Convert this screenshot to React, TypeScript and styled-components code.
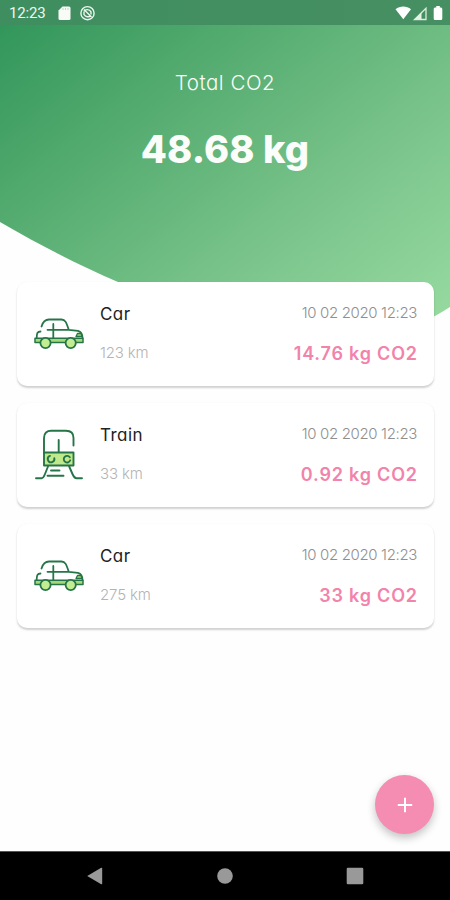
import React from "react";
import styled, { createGlobalStyle } from "styled-components";

const GlobalStyle = createGlobalStyle`
  * { box-sizing: border-box; }
  body {
    margin: 0;
    background: #fff;
    font-family: Inter, "Open Sans", sans-serif;
    font-feature-settings: "cv11";
  }
`;

const Screen = styled.div`
  position: relative;
  width: 450px;
  height: 900px;
  overflow: hidden;
  display: flex;
  flex-direction: column;
  background: #fefefe;
`;

const Backdrop = styled.svg`
  position: absolute;
  top: 0;
  left: 0;
`;

const StatusBar = styled.header`
  position: relative;
  height: 25px;
  padding: 0 6px 0 9px;
  display: flex;
  align-items: center;
  background: linear-gradient(90deg, #3f8e60, #468f62);
  color: #eef7ef;
  font-family: Roboto, sans-serif;
  font-size: 15px;
  line-height: 26px;
  letter-spacing: -0.15px;
`;

const StatusIcons = styled.div<{ $push?: boolean }>`
  display: flex;
  margin-left: ${(p) => (p.$push ? "auto" : "11px")};
  svg { display: block; }
`;

const Summary = styled.section`
  position: relative;
  height: 257px;
  padding-top: 42px;
  display: flex;
  flex-direction: column;
  align-items: center;
  color: #fafdf9;
`;

const SummaryLabel = styled.div`
  height: 30px;
  line-height: 31px;
  font-size: 20.5px;
  font-weight: 300;
  letter-spacing: 0.55px;
`;

const SummaryValue = styled.div`
  margin-top: 26px;
  line-height: 52px;
  font-size: 38px;
  font-weight: 800;
  letter-spacing: 0.1px;
`;

const List = styled.main`
  position: relative;
  flex: 1;
  display: flex;
  flex-direction: column;
  gap: 17px;
  padding: 0 16px 0 17px;
`;

const Card = styled.article`
  height: 104px;
  padding: 0 17px;
  display: flex;
  align-items: center;
  border-radius: 10px;
  background: #fff;
  box-shadow: 0 1.5px 2px rgba(0, 0, 0, 0.18);
`;

const Column = styled.div<{ $end?: boolean }>`
  height: 104px;
  padding: 19px 0 18px;
  display: flex;
  flex-direction: column;
  justify-content: space-between;
  margin-left: ${(p) => (p.$end ? "auto" : "16px")};
  align-items: ${(p) => (p.$end ? "flex-end" : "flex-start")};
`;

const Title = styled.div`
  font-size: 17px;
  line-height: 27px;
  letter-spacing: 0.45px;
  color: #222;
`;

const Distance = styled.div`
  font-size: 15px;
  line-height: 30px;
  font-weight: 300;
  letter-spacing: -0.15px;
  color: #b4b4b4;
`;

const Stamp = styled.div`
  font-size: 15px;
  line-height: 24px;
  font-weight: 300;
  letter-spacing: -0.35px;
  color: #8f8f8f;
`;

const Emission = styled.div`
  margin-right: -0.8px;
  font-size: 18px;
  line-height: 28px;
  font-weight: 600;
  letter-spacing: 0.8px;
  color: #f283aa;
`;

const AddButton = styled.button`
  position: absolute;
  right: 16px;
  bottom: 66px;
  width: 59px;
  height: 59px;
  padding: 0;
  border: 0;
  border-radius: 50%;
  display: grid;
  place-items: center;
  background: #f48db1;
  box-shadow: 0 4px 8px rgba(0, 0, 0, 0.24);
`;

const NavBar = styled.nav`
  position: relative;
  height: 49px;
  border-top: 1px solid #555;
  display: flex;
  justify-content: space-around;
  align-items: center;
  padding: 0 30px;
  background: #000;
`;

const CarIcon = () => (
  <svg width="50" height="50" viewBox="0 0 50 50" fill="none" stroke="#267548" strokeWidth="1.8" strokeLinecap="round" strokeLinejoin="round">
    <path d="M1 29.3H49V33.5H1Z" fill="#a7d878" strokeWidth="1.5" />
    <path d="M7.5 17.5C9 12.5 11 10.5 15 10.5H27.5C31.5 10.5 32.5 14 34.8 20.8M13.5 20.8H34.8L44 21.8C47.5 22.8 48.5 25 48.5 29M19.3 15V29M6.5 22.5C3.7 22.5 2.7 24 2.7 28.5" />
    <path d="M47 24.5H43.5L42 27.5L48 27.3Z" fill="#a7d878" strokeWidth="1.3" />
    <circle cx="11.5" cy="34" r="5.1" fill="#c3ed91" />
    <circle cx="36.7" cy="34" r="5.1" fill="#c3ed91" />
  </svg>
);

const TrainIcon = () => (
  <svg width="50" height="52" viewBox="0 0 50 52" fill="none" stroke="#267548" strokeWidth="1.9" strokeLinecap="round" strokeLinejoin="round">
    <path d="M10 23.5H39.5V36.5H10Z" fill="#bfe98a" />
    <path d="M10 24V9C10 4 13 1.8 17 1.8H32C37 1.8 39.5 4 39.5 9V16.5M24.7 11V23M14 37.5L10.8 45.5Q9.3 49.2 7.5 49.2H2M35.2 37.5L38.7 45.5Q40.3 49.2 42.5 49.2H48M17 41.5H25.5M13.5 46.7H29.5" />
    <path d="M20.3 29.3A3.3 3.3 0 1 1 16 26.9M36.2 31.3A3.3 3.3 0 1 1 35.8 28.3" />
  </svg>
);

const trips = [
  { Icon: CarIcon, name: "Car", distance: "123 km", emission: "14.76 kg CO2" },
  { Icon: TrainIcon, name: "Train", distance: "33 km", emission: "0.92 kg CO2" },
  { Icon: CarIcon, name: "Car", distance: "275 km", emission: "33 kg CO2" },
];

export default function App() {
  return (
    <Screen>
      <GlobalStyle />
      <Backdrop width="450" height="350" viewBox="0 0 450 350">
        <defs>
          <linearGradient id="leaf" gradientUnits="userSpaceOnUse" x1="20" y1="10" x2="345" y2="415">
            <stop offset="0" stopColor="#32965b" />
            <stop offset="0.28" stopColor="#52aa6e" />
            <stop offset="0.65" stopColor="#7ac48b" />
            <stop offset="1" stopColor="#98dba1" />
          </linearGradient>
        </defs>
        <path d="M0 0H450V307C354 369 242 334 118 282C78 265 38 244 0 222Z" fill="url(#leaf)" />
      </Backdrop>
      <StatusBar>
        12:23
        <StatusIcons>
          <svg width="44" height="18" viewBox="0 0 44 18">
            <path d="M5.5 2.5H12Q13.5 2.5 13.5 4V14.5Q13.5 16 12 16H3Q1.5 16 1.5 14.5V6.5Z" fill="#f8fbf6" />
            <path d="M6 4V6M8.5 4V6M11 4V6" stroke="#b9d8c2" />
            <g fill="none" stroke="#edf6ee" strokeWidth="1.4">
              <circle cx="30.5" cy="9.2" r="6.6" />
              <path d="M27 7.2C28.5 5 32.5 5 34 7.8V10.5M27 7.5V10.5C28.5 13.2 32 13.4 33.5 11.8M27 5.5L34.5 13" />
            </g>
          </svg>
        </StatusIcons>
        <StatusIcons $push>
          <svg width="50" height="18" viewBox="0 0 50 18">
            <path d="M1.5 5.3C6 1.6 12.5 1.6 17 5.3L9.3 15.3Z" fill="#fff" />
            <path d="M32 4.3L20.5 15.5H32Z" fill="none" stroke="#dcebdd" strokeWidth="1.3" />
            <path d="M27.5 8.8L20.5 15.5H27.5Z" fill="#e6f2e8" />
            <path d="M42.3 2H45.8V3.5H47Q48.3 3.5 48.3 5V14.5Q48.3 16 47 16H41Q39.7 16 39.7 14.5V5Q39.7 3.5 41 3.5H42.3Z" fill="#fff" />
          </svg>
        </StatusIcons>
      </StatusBar>
      <Summary>
        <SummaryLabel>Total CO2</SummaryLabel>
        <SummaryValue>48.68 kg</SummaryValue>
      </Summary>
      <List>
        {trips.map(({ Icon, ...trip }, i) => (
          <Card key={i}>
            <Icon />
            <Column>
              <Title>{trip.name}</Title>
              <Distance>{trip.distance}</Distance>
            </Column>
            <Column $end>
              <Stamp>10 02 2020 12:23</Stamp>
              <Emission>{trip.emission}</Emission>
            </Column>
          </Card>
        ))}
      </List>
      <AddButton aria-label="Add trip">
        <svg width="16" height="16" viewBox="0 0 16 16" stroke="#fff" strokeWidth="2">
          <path d="M8 0.8V15.2M0.8 8H15.2" />
        </svg>
      </AddButton>
      <NavBar>
        <svg width="18" height="18" viewBox="0 0 18 18" fill="#999"><path d="M1.2 9L15.2 0.8Q16.2 0.5 16.2 1.5V16.5Q16.2 17.5 15.2 17.2Z" /></svg>
        <svg width="18" height="18" viewBox="0 0 18 18" fill="#999"><circle cx="9" cy="9" r="7.8" /></svg>
        <svg width="18" height="18" viewBox="0 0 18 18" fill="#999"><rect x="0.7" y="0.7" width="16.6" height="16.6" rx="1.2" /></svg>
      </NavBar>
    </Screen>
  );
}
